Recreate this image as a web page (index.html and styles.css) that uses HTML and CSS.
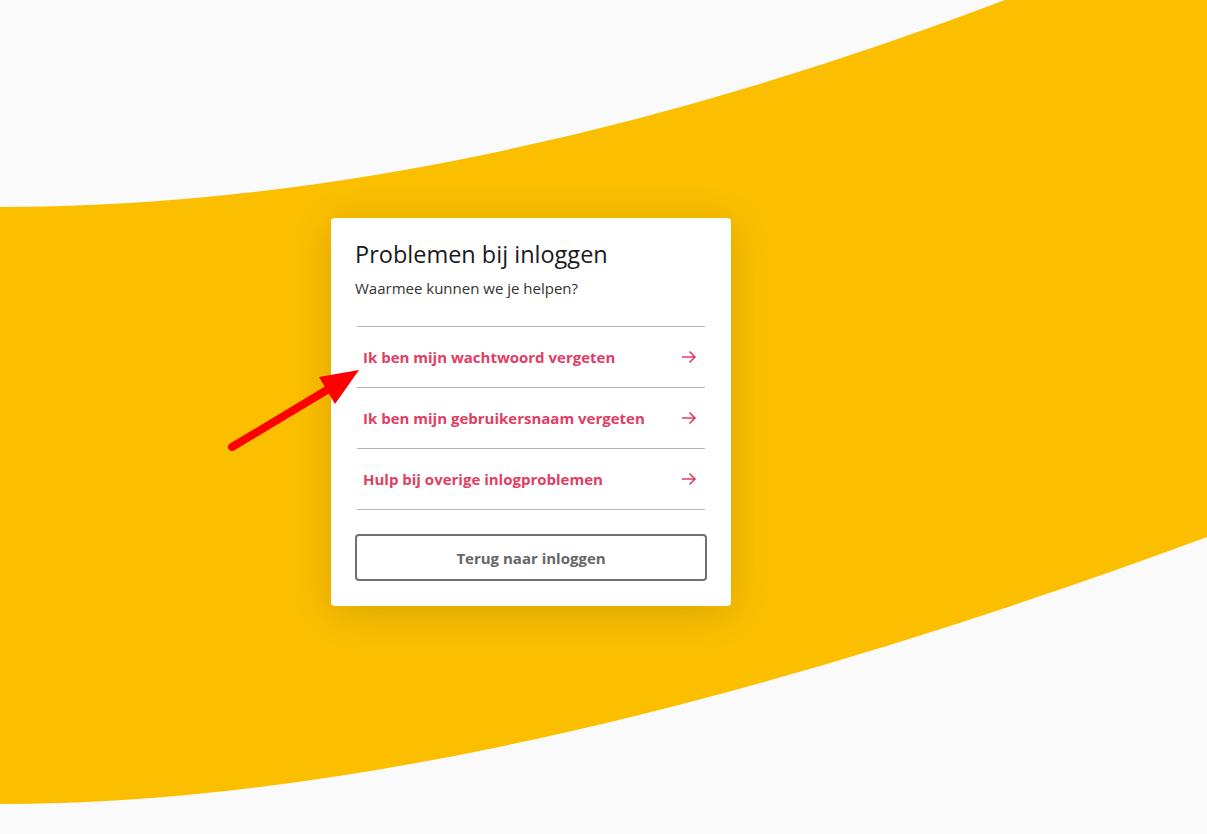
FILE: index.html
```html
<!DOCTYPE html>
<html lang="nl">
<head>
    <meta charset="UTF-8">
    <meta name="viewport" content="width=device-width, initial-scale=1.0">
    <title>Problemen bij inloggen</title>
    <link rel="stylesheet" href="styles.css">
</head>
<body>

<svg class="band" viewBox="0 0 1207 834" preserveAspectRatio="none" aria-hidden="true">
    <path d="M0,207 Q460,207 1005,0 L1207,0 L1207,537 Q485,804 0,804 Z" fill="#FBBF00"/>
</svg>

<div class="page">
    <div class="card">
        <h2>Problemen bij inloggen</h2>
        <p class="intro">Waarmee kunnen we je helpen?</p>

        <ul class="options">
            <li><a href="#">Ik ben mijn wachtwoord vergeten <span class="arrow"><svg viewBox="0 0 18 18"><path d="M2 9h13M9.5 3.5 15 9l-5.5 5.5"/></svg></span></a></li>
            <li><a href="#">Ik ben mijn gebruikersnaam vergeten <span class="arrow"><svg viewBox="0 0 18 18"><path d="M2 9h13M9.5 3.5 15 9l-5.5 5.5"/></svg></span></a></li>
            <li><a href="#">Hulp bij overige inlogproblemen <span class="arrow"><svg viewBox="0 0 18 18"><path d="M2 9h13M9.5 3.5 15 9l-5.5 5.5"/></svg></span></a></li>
        </ul>

        <button class="back">Terug naar inloggen</button>
    </div>
</div>

<!-- annotation arrow -->
<svg class="pointer" viewBox="0 0 1207 834" aria-hidden="true">
    <line x1="232" y1="447" x2="332" y2="387" stroke="#FF0000" stroke-width="8" stroke-linecap="round"/>
    <polygon points="319,377 359,370 335,404" fill="#FF0000"/>
</svg>

</body>
</html>
```

FILE: styles.css
```css
/* Login help page */
body {
    margin: 0;
    background: #FAFAFA;
    font-family: "Open Sans", Arial, sans-serif;
    height: 834px;
    overflow: hidden;
}
.band {
    position: absolute;
    top: 0;
    left: 0;
    width: 1207px;
    height: 834px;
}
.pointer {
    position: absolute;
    top: 0;
    left: 0;
    width: 1207px;
    height: 834px;
    pointer-events: none;
}
.page {
    position: relative;
    padding: 218px 0 0 331px;
}
.card {
    width: 400px;
    box-sizing: border-box;
    background: #fff;
    border-radius: 4px;
    padding: 22px 24px 25px 24px;
    box-shadow: 0 6px 40px rgba(0, 0, 0, 0.14);
}
h2 {
    margin: 0;
    font-size: 23.5px;
    font-weight: 400;
    color: #1a1a1a;
    line-height: 28px;
}
.intro {
    margin: 10px 0 0 0;
    font-size: 15px;
    color: #333;
    line-height: 20px;
}
.options {
    list-style: none;
    margin: 28px 2px 0 2px;
    padding: 0;
    border-top: 1px solid #b5b5b5;
}
.options li {
    border-bottom: 1px solid #b5b5b5;
}
.options a {
    display: flex;
    align-items: center;
    justify-content: space-between;
    height: 60px;
    padding: 0 7px 0 6px;
    color: #E23D62;
    font-weight: 700;
    font-size: 15px;
    text-decoration: none;
}
.arrow svg {
    width: 18px;
    height: 18px;
    display: block;
    fill: none;
    stroke: #E23D62;
    stroke-width: 1.6;
}
.back {
    display: block;
    width: 100%;
    height: 47px;
    margin-top: 24px;
    background: #fff;
    border: 2px solid #707070;
    border-radius: 4px;
    color: #666;
    font-family: inherit;
    font-weight: 700;
    font-size: 15px;
    cursor: pointer;
}
```
